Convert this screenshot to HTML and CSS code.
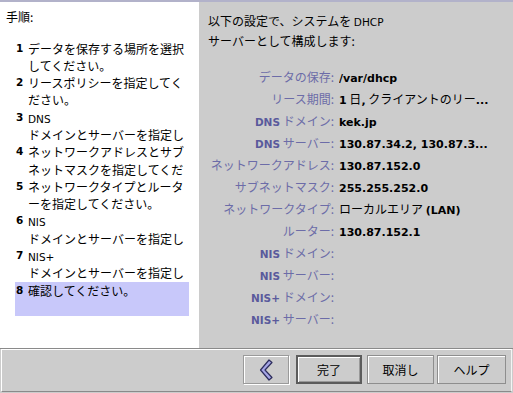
FILE: index.html
```html
<!DOCTYPE html>
<html>
<head>
<meta charset="utf-8">
<title>DHCP 構成</title>
<link rel="stylesheet" href="styles.css">
</head>
<body>
<div class="topbar"></div>
<div class="main">
	<div class="steps">
		<div class="steps-title">手順:</div>
		<div class="step"><span class="num">1</span><span class="txt">データを保存する場所を選択<br>してください。</span></div>
		<div class="step"><span class="num">2</span><span class="txt">リースポリシーを指定してく<br>ださい。</span></div>
		<div class="step"><span class="num">3</span><span class="txt"><span class="en">DNS</span><br>ドメインとサーバーを指定し</span></div>
		<div class="step"><span class="num">4</span><span class="txt">ネットワークアドレスとサブ<br>ネットマスクを指定してくだ</span></div>
		<div class="step"><span class="num">5</span><span class="txt">ネットワークタイプとルータ<br>ーを指定してください。</span></div>
		<div class="step"><span class="num">6</span><span class="txt"><span class="en">NIS</span><br>ドメインとサーバーを指定し</span></div>
		<div class="step"><span class="num">7</span><span class="txt"><span class="en">NIS+</span><br>ドメインとサーバーを指定し</span></div>
		<div class="step current"><span class="num">8</span><span class="txt">確認してください。</span></div>
	</div>
	<div class="summary">
		<div class="intro">以下の設定で、システムを <span class="en">DHCP</span><br>サーバーとして構成します:</div>
		<div class="rows">
			<div class="lbl">データの保存:</div>
			<div class="val"><b>/var/dhcp</b></div>
			<div class="lbl">リース期間:</div>
			<div class="val"><b>1</b> <span class="ja">日</span><b>,</b> <span class="ja">クライアントのリー</span><b>...</b></div>
			<div class="lbl"><b>DNS</b> ドメイン:</div>
			<div class="val"><b>kek.jp</b></div>
			<div class="lbl"><b>DNS</b> サーバー:</div>
			<div class="val"><b>130.87.34.2, 130.87.3...</b></div>
			<div class="lbl">ネットワークアドレス:</div>
			<div class="val"><b>130.87.152.0</b></div>
			<div class="lbl">サブネットマスク:</div>
			<div class="val"><b>255.255.252.0</b></div>
			<div class="lbl">ネットワークタイプ:</div>
			<div class="val"><span class="ja">ローカルエリア</span> <b>(LAN)</b></div>
			<div class="lbl">ルーター:</div>
			<div class="val"><b>130.87.152.1</b></div>
			<div class="lbl"><b>NIS</b> ドメイン:</div>
			<div class="val"></div>
			<div class="lbl"><b>NIS</b> サーバー:</div>
			<div class="val"></div>
			<div class="lbl"><b>NIS+</b> ドメイン:</div>
			<div class="val"></div>
			<div class="lbl"><b>NIS+</b> サーバー:</div>
			<div class="val"></div>
		</div>
	</div>
</div>
<div class="footer">
	<div class="footer-inner">
		<button class="btn btn-back" type="button" title="戻る">
			<svg width="14" height="22" viewBox="0 0 14 22"><polygon points="10,1 13,3.5 6,11 13,18.5 10,21 1.5,11" fill="#a4a4e4" stroke="#2c2c5c" stroke-width="1.2" stroke-linejoin="round"/></svg>
		</button>
		<button class="btn btn-default btn-done" type="button">完了</button>
		<button class="btn btn-cancel" type="button">取消し</button>
		<button class="btn btn-help" type="button">ヘルプ</button>
	</div>
</div>
</body>
</html>
```

FILE: styles.css
```css
body		{ margin: 0 ; width: 513px ; height: 393px ; overflow: hidden ; background: #cccccc ; font-family: "Noto Sans CJK JP", sans-serif ; font-size: 12px ; color: #000 ; }
.en, b		{ font-family: "DejaVu Sans", "Noto Sans CJK JP", sans-serif ; font-size: 10.5px ; line-height: 1 ; }
.ja		{ line-height: 1 ; font-weight: normal ; }
.topbar		{ height: 2px ; background: #b2b2ca ; }
.main		{ display: flex ; height: 346px ; }

/* left: list of steps */
.steps		{ width: 199px ; background: #fff ; padding-top: 6px ; box-sizing: border-box ; }
.steps-title	{ padding-left: 6px ; line-height: 17px ; margin-bottom: 14.5px ; }
.step		{ display: flex ; margin-left: 15px ; width: 174px ; height: 34.6px ; line-height: 17.3px ; }
.step.current	{ background: #c8c8fa ; }
.num		{ width: 12px ; padding-left: 1px ; flex: none ; font-family: "DejaVu Sans", sans-serif ; font-weight: bold ; font-size: 10.5px ; }
.txt		{ flex: 1 ; white-space: nowrap ; overflow: hidden ; }

/* right: summary */
.summary	{ flex: 1 ; padding: 9px 0 0 9px ; }
.intro		{ line-height: 20px ; }
.rows		{ display: grid ; grid-template-columns: 126px 150px ; grid-auto-rows: 22px ; column-gap: 5px ; margin-top: 15px ; }
.lbl		{ text-align: right ; color: #6c6ca8 ; line-height: 22px ; white-space: nowrap ; }
.lbl b		{ color: #5a5a9c ; }
.val		{ line-height: 22px ; white-space: nowrap ; overflow: hidden ; }
.val b		{ font-size: 11px ; }

/* bottom buttons */
.footer		{ height: 45px ; border-top: 1px solid #8a8a8a ; box-sizing: border-box ; padding: 0 1px 1px 1px ; }
.footer-inner	{ height: 100% ; box-sizing: border-box ; border-top: 1px solid #fff ; border-left: 1px solid #fff ; border-right: 1px solid #f4f4f4 ; border-bottom: 1px solid #8a8a8a ; display: flex ; justify-content: flex-end ; align-items: flex-start ; padding: 5px 5px 0 0 ; }
.btn		{ height: 29px ; margin: 0 ; padding: 0 ; background: #cccccc ; border: 1px solid #8e8e8e ; box-shadow: inset 1px 1px 0 #fff ; font-family: "Noto Sans CJK JP", sans-serif ; font-size: 12px ; color: #000 ; display: flex ; align-items: center ; justify-content: center ; }
.btn-back	{ width: 46px ; border-color: #9a9a9a ; box-shadow: inset 1px 1px 0 #fff, 1px 1px 0 #fff ; }
.btn-default	{ border: 2px solid #5c5c5c ; box-shadow: inset 1px 1px 0 #fff, inset -1px -1px 0 #999 ; }
.btn-done	{ width: 66px ; margin-left: 7px ; }
.btn-cancel	{ width: 67px ; margin-left: 5px ; }
.btn-help	{ width: 69px ; margin-left: 3px ; }
```
